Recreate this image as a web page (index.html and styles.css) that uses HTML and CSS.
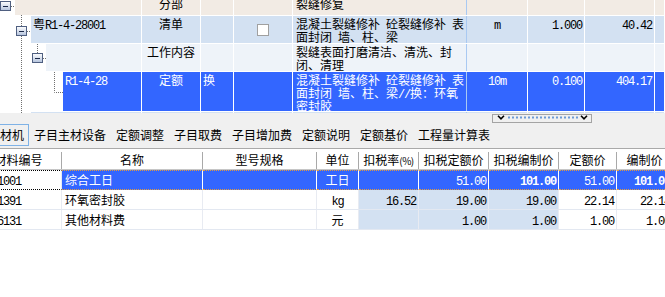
FILE: index.html
```html
<!DOCTYPE html>
<html lang="zh-CN">
<head>
<meta charset="utf-8">
<title>定额</title>
<link rel="stylesheet" href="styles.css">
</head>
<body>
<div class="app">
  <section class="tree-pane">
    <div class="trow r0 l0">
      <div class="tree"><div class="tc"></div></div>
      <div class="c">分部</div>
      <div></div>
      <div></div>
      <div class="nm">裂缝修复</div>
      <div></div><div></div><div></div><div></div>
    </div>
    <div class="trow r1 l1">
      <div class="tree"><div class="tc">粤<span class="a">R1-4-28001</span></div></div>
      <div class="c">清单</div>
      <div></div>
      <div class="chk"><span class="box"></span></div>
      <div class="nm">混凝土裂缝修补<span class="a"> </span>砼裂缝修补<span class="a"> </span>表<br>面封闭<span class="a"> </span>墙、柱、梁</div>
      <div class="c"><span class="a">m</span></div>
      <div class="rt"><span class="a">1.000</span></div>
      <div class="rt"><span class="a">40.42</span></div>
      <div></div>
    </div>
    <div class="trow r2 l2">
      <div class="tree"><div class="tc"></div></div>
      <div class="c">工作内容</div>
      <div></div>
      <div></div>
      <div class="nm">裂缝表面打磨清洁、清洗、封<br>闭、清理</div>
      <div></div><div></div><div></div><div></div>
    </div>
    <div class="trow r3 l3">
      <div class="tree"><div class="tc"><span class="a">R1-4-28</span></div></div>
      <div class="c">定额</div>
      <div>换</div>
      <div></div>
      <div class="nm">混凝土裂缝修补<span class="a"> </span>砼裂缝修补<span class="a"> </span>表<br>面封闭<span class="a"> </span>墙、柱、梁<span class="a">//</span>换：环氧<br>密封胶</div>
      <div class="c"><span class="a">10m</span></div>
      <div class="rt"><span class="a">0.100</span></div>
      <div class="rt"><span class="a">404.17</span></div>
      <div></div>
    </div>
    <div class="trow r4 l1">
      <div class="tree"><div class="tc"></div></div>
      <div></div><div></div><div></div><div class="nm"></div><div></div><div></div><div></div><div></div>
    </div>
    <svg class="tree-lines" width="64" height="113" viewBox="0 0 64 113">
      <defs>
        <linearGradient id="bx" x1="0" y1="0" x2="0" y2="1">
          <stop offset="0" stop-color="#ffffff"/>
          <stop offset="1" stop-color="#b3c2dc"/>
        </linearGradient>
      </defs>
      <g stroke="#707070" stroke-dasharray="1 1" fill="none">
        <path d="M11 6.5H15"/>
        <path d="M21.5 15V26M21.5 36V113"/>
        <path d="M27 31.5H31"/>
        <path d="M37.5 44V53"/>
        <path d="M43 58.5H46"/>
        <path d="M54.5 72V92.5H63"/>
      </g>
      <g stroke="#4f5f80">
        <rect x="0.5" y="1.5" width="10" height="9" fill="url(#bx)"/>
        <rect x="16.5" y="26.5" width="10" height="9" fill="url(#bx)"/>
        <rect x="32.5" y="53.5" width="10" height="9" fill="url(#bx)"/>
      </g>
      <g stroke="#1a2848">
        <path d="M3 6.5H8"/>
        <path d="M19 31.5H24"/>
        <path d="M35 58.5H40"/>
      </g>
    </svg>
  </section>

  <section class="tabbar">
    <div class="grip">
      <svg width="98" height="6" viewBox="0 0 98 6">
        <path d="M5 0.8L8 3.8L11 0.8" stroke="#000" stroke-width="1.6" fill="none"/>
        <path d="M15 2.5H85" stroke="#6d9bd6" stroke-width="2" stroke-dasharray="2 2"/>
        <path d="M88 0.8L91 3.8L94 0.8" stroke="#000" stroke-width="1.6" fill="none"/>
      </svg>
    </div>
    <nav class="tabs">
      <span class="tab on">人材机</span>
      <span class="tab">子目主材设备</span>
      <span class="tab">定额调整</span>
      <span class="tab">子目取费</span>
      <span class="tab">子目增加费</span>
      <span class="tab">定额说明</span>
      <span class="tab">定额基价</span>
      <span class="tab">工程量计算表</span>
    </nav>
  </section>

  <section class="grid">
    <div class="ghead">
      <div>材料编号</div>
      <div>名称</div>
      <div>型号规格</div>
      <div>单位</div>
      <div>扣税率<span class="pct">(%)</span></div>
      <div>扣税定额价</div>
      <div>扣税编制价</div>
      <div>定额价</div>
      <div>编制价</div>
    </div>
    <div class="grow sel">
      <div class="code"><span class="a">0001001</span></div>
      <div>综合工日</div>
      <div></div>
      <div class="c">工日</div>
      <div class="rt"></div>
      <div class="rt"><span class="a">51.00</span></div>
      <div class="rt"><span class="a b">101.00</span></div>
      <div class="rt"><span class="a">51.00</span></div>
      <div class="rt"><span class="a b">101.00</span></div>
    </div>
    <div class="grow">
      <div class="code"><span class="a">0801391</span></div>
      <div>环氧密封胶</div>
      <div></div>
      <div class="c"><span class="a">kg</span></div>
      <div class="rt lb"><span class="a">16.52</span></div>
      <div class="rt lb"><span class="a">19.00</span></div>
      <div class="rt lb"><span class="a">19.00</span></div>
      <div class="rt"><span class="a">22.14</span></div>
      <div class="rt"><span class="a">22.14</span></div>
    </div>
    <div class="grow">
      <div class="code"><span class="a">0806131</span></div>
      <div>其他材料费</div>
      <div></div>
      <div class="c">元</div>
      <div class="rt lb"></div>
      <div class="rt lb"><span class="a">1.00</span></div>
      <div class="rt lb"><span class="a">1.00</span></div>
      <div class="rt"><span class="a">1.00</span></div>
      <div class="rt"><span class="a">1.00</span></div>
    </div>
  </section>
</div>
</body>
</html>
```

FILE: styles.css
```css
* { box-sizing: border-box; margin: 0; padding: 0; }

html, body { background: #fff; }

body {
  width: 665px;
  height: 297px;
  overflow: hidden;
  font-family: "Noto Sans CJK SC", sans-serif;
  font-size: 12px;
  line-height: 13px;
  color: #000;
}

.app { width: 665px; }

.a {
  font-family: "Liberation Mono", monospace;
  font-size: 12px;
  letter-spacing: -1.2px;
  line-height: 0;
}
.b { font-weight: bold; }
.pct { font-size: 10px; letter-spacing: -0.5px; }

.c { text-align: center; }
.rt { text-align: right; }

/* ---------- top tree grid ---------- */
.tree-pane {
  position: relative;
  height: 113px;
  overflow: hidden;
  background: #fff;
}

.trow {
  display: grid;
  grid-template-columns: 142px 59px 33px 59px 174px 61px 57px 70px 1fr;
  border-bottom: 1px solid #fff;
}

.trow > div {
  background: var(--bg);
  border-right: 1px solid #fff;
  padding: 1px 2px 0;
  white-space: nowrap;
  overflow: hidden;
}
.trow > .nm { padding-left: 3px; border-right-color: #a9c9f2; }
.trow > .rt { padding-right: 2px; }

.trow > .tree { background: #fff; padding: 0; }
.tree .tc {
  height: 100%;
  background: var(--bg);
  padding: 1px 2px 0;
}
.l0 .tc { margin-left: 15px; }
.l1 .tc { margin-left: 31px; }
.l2 .tc { margin-left: 46px; }
.l3 .tc { margin-left: 63px; }

.r0 { --bg: #f2ebe4; height: 20px; margin-top: -4px; }
.r1 { --bg: #d3e1f2; height: 28px; }
.r2 { --bg: #eef3f9; height: 28px; }
.r3 { --bg: #3366ff; height: 40px; color: #fff; }
.r4 { --bg: #d3e1f2; height: 28px; }

.trow > .chk {
  display: flex;
  align-items: center;
  justify-content: center;
  padding: 0;
}
.chk .box {
  width: 12px;
  height: 12px;
  background: #fff;
  border: 1px solid #a0a0a0;
}

.tree-lines {
  position: absolute;
  left: 0;
  top: 0;
  pointer-events: none;
}

/* ---------- tab bar ---------- */
.tabbar {
  background: #f0f0f0;
  height: 35px;
  padding-top: 1px;
}

.grip {
  margin-left: 492px;
  width: 100px;
  height: 9px;
  border: 1px solid #a4a4a4;
  background: #f0f0f0;
}
.grip svg { display: block; }

.tabs {
  display: flex;
  margin-top: 1px;
  margin-left: -17px;
  height: 22px;
}
.tab {
  padding: 0 4px;
  border: 1px solid transparent;
  line-height: 20px;
  font-size: 12px;
  white-space: nowrap;
  color: #000;
}
.tab.on { border-color: #7fb2e6; }

/* ---------- detail grid ---------- */
.grid {
  width: 665px;
  overflow: hidden;
  background: #fff;
}

.ghead, .grow {
  display: grid;
  grid-template-columns: 86px 141px 114px 42px 60px 70px 70px 58px 56px;
  width: 697px;
  margin-left: -24px;
}

.ghead {
  height: 22px;
  padding-top: 3px;
  border-top: 1px solid #a9a9a9;
  border-bottom: 1px solid #c6c6c6;
  background: #fff;
}
.ghead > div {
  border-right: 1px solid #a9a9a9;
  text-align: center;
  line-height: 16px;
  white-space: nowrap;
  overflow: hidden;
}

.grow {
  height: 20px;
  border-bottom: 1px solid #e3e8f1;
}
.grow > div {
  border-right: 1px solid #e8ebf2;
  padding: 0 3px;
  line-height: 19px;
  white-space: nowrap;
  overflow: hidden;
}
.grow > .rt { padding-right: 2px; }
.grow > .lb { background: #d3e1f2; }

.grow.sel { border-bottom: 0; }
.sel > div {
  background: #3366ff;
  color: #fff;
  border-top: 1px dotted #e39a3c;
  border-bottom: 1px dotted #e39a3c;
  border-right-color: #fff;
  line-height: 18px;
}
.sel > .code {
  background: #fff;
  color: #000;
  border-top-color: #000;
  border-bottom-color: #000;
  border-right-color: #e8ebf2;
}
```
